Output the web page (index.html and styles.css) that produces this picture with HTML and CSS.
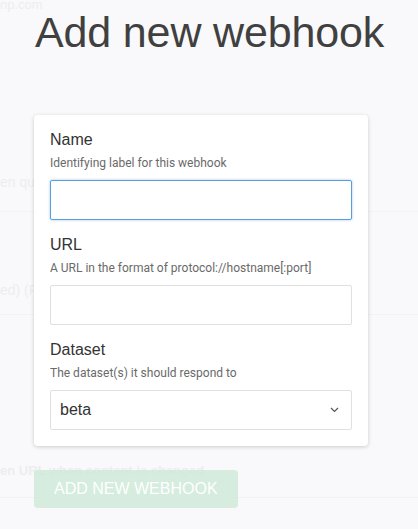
FILE: index.html
```html
<!DOCTYPE html>
<html>
<head>
<meta charset="utf-8">
<link rel="stylesheet" href="styles.css">
</head>
<body>
<div class="ghost">
  <div class="ghost-row g1"><span>np.com</span></div>
  <div class="ghost-row g2"><span>en qu</span></div>
  <div class="ghost-row g3"><span>ed) (R</span></div>
  <div class="ghost-row g4"><span>en URL when content is changed</span></div>
</div>
<main class="page">
  <h1 class="title">Add new webhook</h1>
  <form class="card">
    <div class="field">
      <label class="label">Name</label>
      <p class="help">Identifying label for this webhook</p>
      <div class="input focused"></div>
    </div>
    <div class="field">
      <label class="label">URL</label>
      <p class="help">A URL in the format of protocol://hostname[:port]</p>
      <div class="input"></div>
    </div>
    <div class="field">
      <label class="label">Dataset</label>
      <p class="help">The dataset(s) it should respond to</p>
      <div class="input select">
        <span class="value">beta</span>
        <svg class="chev" width="9" height="6" viewBox="0 0 9 6"><path d="M1 1 L4.5 4.5 L8 1" fill="none" stroke="#555" stroke-width="1.2"/></svg>
      </div>
    </div>
  </form>
  <button class="btn" type="button">ADD NEW WEBHOOK</button>
</main>
</body>
</html>
```
FILE: styles.css
```css
html, body {
  margin: 0;
  padding: 0;
  background: #f9f9fb;
  width: 418px;
  height: 529px;
  overflow: hidden;
}
body {
  position: relative;
  font-family: "Liberation Sans", Arial, sans-serif;
}
.ghost {
  position: absolute;
  left: 0;
  top: 0;
  width: 418px;
  display: flex;
  flex-direction: column;
  color: #ededf0;
  font-family: "Liberation Sans", Arial, sans-serif;
}
.ghost-row {
  border-bottom: 1px solid #f2f2f5;
}
.g1 {
  font-size: 13px;
  line-height: 16px;
  margin-top: -3px;
  height: 15px;
  border-bottom: none;
}
.g2 {
  font-size: 14px;
  line-height: 16px;
  padding-top: 162px;
  height: 37px;
}
.g3 {
  font-size: 14px;
  line-height: 16px;
  padding-top: 70px;
  height: 32px;
}
.g4 {
  font-size: 13px;
  font-weight: bold;
  line-height: 18px;
  padding-top: 147px;
  height: 35px;
}
.page {
  position: relative;
  display: flex;
  flex-direction: column;
  align-items: flex-start;
  padding-left: 34px;
}
.title {
  margin: 6px 0 0 0;
  font-size: 43px;
  line-height: 52px;
  font-weight: normal;
  letter-spacing: -0.15px;
  color: #404040;
  padding-left: 1px;
}
.card {
  margin-top: 57px;
  width: 302px;
  padding: 15px 16px 16px 16px;
  background: #fff;
  border-radius: 4px;
  box-shadow: 0 1px 4px rgba(0, 0, 0, 0.18);
  display: flex;
  flex-direction: column;
  gap: 15px;
}
.field {
  display: flex;
  flex-direction: column;
}
.label {
  font-size: 16px;
  line-height: 20px;
  color: #333;
}
.help {
  margin: 4px 0 0 0;
  font-family: Roboto, "Liberation Sans", sans-serif;
  font-size: 12px;
  line-height: 18px;
  color: #6a6a6a;
}
.input {
  margin-top: 8px;
  height: 38px;
  border: 1px solid #e0e0e0;
  border-radius: 2px;
  background: #fff;
}
.focused {
  border-color: #5a9edb;
  box-shadow: 0 0 3px rgba(90, 158, 219, 0.55);
}
.select {
  display: flex;
  align-items: center;
  justify-content: space-between;
  padding: 0 12px 0 9px;
}
.value {
  font-size: 16px;
  color: #333;
}
.chev {
  display: block;
}
.btn {
  margin-top: 24px;
  height: 38px;
  padding: 0 20px;
  border: none;
  border-radius: 4px;
  background: rgba(204, 232, 215, 0.8);
  color: #fff;
  font-family: "Liberation Sans", Arial, sans-serif;
  font-size: 16px;
  line-height: 38px;
}
```
